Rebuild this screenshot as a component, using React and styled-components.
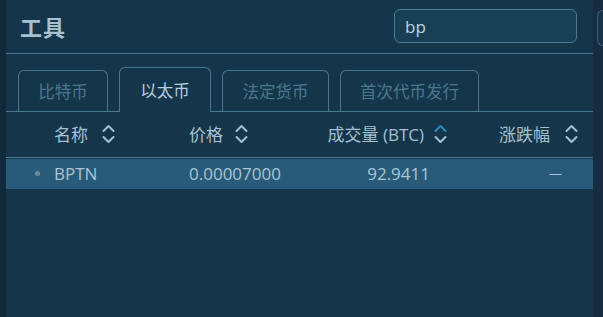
import React from "react";
import styled, { createGlobalStyle } from "styled-components";

const GlobalStyle = createGlobalStyle`
  html, body {
    margin: 0;
    padding: 0;
    background: #11293b;
  }
  body {
    font-family: "Open Sans", "Noto Sans CJK SC", sans-serif;
  }
`;

const Page = styled.div`
  display: flex;
  height: 317px;
  width: 603px;
  overflow: hidden;
`;

const LeftStrip = styled.div`
  width: 6px;
  flex-shrink: 0;
  background: #11293b;
`;

const Panel = styled.div`
  width: 587px;
  flex-shrink: 0;
  background: #15364a;
  display: flex;
  flex-direction: column;
`;

const RightStrip = styled.div`
  flex: 1;
  background: #172c40;
  padding: 10px 0 0 4px;
`;

const GhostBox = styled.div`
  height: 34px;
  border: 1px solid #3c5d74;
  border-right: none;
  border-radius: 7px 0 0 7px;
  background: #183248;
`;

const Header = styled.div`
  height: 54px;
  box-sizing: border-box;
  display: flex;
  align-items: center;
  justify-content: space-between;
  padding: 0 16px 1px 14px;
  border-bottom: 1px solid #4a7690;
`;

const Title = styled.div`
  font-family: "Noto Sans CJK SC", sans-serif;
  font-size: 22px;
  font-weight: 700;
  color: #a8c1d0;
  letter-spacing: 1px;
`;

const Search = styled.input`
  width: 183px;
  height: 34px;
  box-sizing: border-box;
  background: #183f56;
  border: 1px solid #4d7a93;
  border-radius: 6px;
  padding: 0 10px;
  font-family: "Open Sans", sans-serif;
  font-size: 17px;
  color: #bdd3df;
  outline: none;
`;

const Tabs = styled.div`
  display: flex;
  align-items: flex-end;
  gap: 11px;
  padding: 13px 0 0 12px;
  height: 58px;
  box-sizing: border-box;
  border-bottom: 1px solid #4a7690;
`;

const Tab = styled.div`
  width: ${({ $w }) => $w}px;
  height: ${({ $active }) => ($active ? 45 : 41)}px;
  box-sizing: border-box;
  border: 1px solid #4a7690;
  border-bottom: none;
  border-radius: 6px 6px 0 0;
  display: flex;
  align-items: center;
  justify-content: center;
  font-family: "Noto Sans CJK SC", sans-serif;
  font-size: 16.5px;
  color: ${({ $active }) => ($active ? "#b8cfdb" : "#4b7690")};
  background: #15364a;
  margin-bottom: ${({ $active }) => ($active ? "-1px" : "0")};
  padding-bottom: ${({ $active }) => ($active ? "0" : "1px")};
`;

const cols = "48px 135px 111px 155px 1fr";

const HeadRow = styled.div`
  display: grid;
  grid-template-columns: ${cols};
  height: 46px;
  box-sizing: border-box;
  padding-bottom: 2px;
  align-items: center;
  border-bottom: 1px solid #4a7690;
`;

const HeadCell = styled.div`
  grid-column: ${({ $col }) => $col};
  display: flex;
  align-items: center;
  justify-content: ${({ $right }) => ($right ? "flex-end" : "flex-start")};
  gap: ${({ $gap }) => $gap || 12}px;
  padding-right: ${({ $pr }) => $pr || 0}px;
  font-family: "Open Sans", "Noto Sans CJK SC", sans-serif;
  font-size: 17px;
  color: #a6c0cf;
  white-space: nowrap;
`;

const DataRow = styled.div`
  display: grid;
  grid-template-columns: ${cols};
  height: 30px;
  margin-top: 1px;
  padding-bottom: 2px;
  box-sizing: border-box;
  align-items: center;
  background: #285b79;
  font-family: "Open Sans", sans-serif;
  font-size: 17px;
  color: #a9c5d5;
`;

const Cell = styled.div`
  text-align: ${({ $right }) => ($right ? "right" : "left")};
  padding-right: ${({ $pr }) => $pr || 0}px;
  white-space: nowrap;
`;

const Dash = styled(Cell)`
  font-size: 13px;
`;

const Dot = styled.div`
  width: 5px;
  height: 5px;
  border-radius: 50%;
  background: #6b8a9c;
  justify-self: end;
  margin-right: 14px;
`;

const SortIcon = ({ active }) => (
  <svg width="13" height="22" viewBox="0 0 13 22" fill="none">
    <polyline
      points="1.5,8 6.5,3 11.5,8"
      stroke={active ? "#2a8ac2" : "#a6c0cf"}
      strokeWidth="2"
      strokeLinecap="round"
      strokeLinejoin="round"
    />
    <polyline
      points="1.5,14 6.5,19 11.5,14"
      stroke="#a6c0cf"
      strokeWidth="2"
      strokeLinecap="round"
      strokeLinejoin="round"
    />
  </svg>
);

const tabs = [
  { label: "比特币", w: 90 },
  { label: "以太币", w: 92, active: true },
  { label: "法定货币", w: 107 },
  { label: "首次代币发行", w: 139 },
];

export default function App() {
  return (
    <>
      <GlobalStyle />
      <Page>
        <LeftStrip />
        <Panel>
          <Header>
            <Title>工具</Title>
            <Search defaultValue="bp" />
          </Header>
          <Tabs>
            {tabs.map((t) => (
              <Tab key={t.label} $w={t.w} $active={t.active}>
                {t.label}
              </Tab>
            ))}
          </Tabs>
          <HeadRow>
            <HeadCell $col={2} $gap={14}>
              名称 <SortIcon />
            </HeadCell>
            <HeadCell $col={3}>
              价格 <SortIcon />
            </HeadCell>
            <HeadCell $col={4} $right $gap={10} $pr={8}>
              成交量 (BTC) <SortIcon active />
            </HeadCell>
            <HeadCell $col={5} $right $gap={15} $pr={15}>
              涨跌幅 <SortIcon />
            </HeadCell>
          </HeadRow>
          <DataRow>
            <Dot />
            <Cell>BPTN</Cell>
            <Cell>0.00007000</Cell>
            <Cell $right $pr={25}>92.9411</Cell>
            <Dash $right $pr={31}>—</Dash>
          </DataRow>
        </Panel>
        <RightStrip>
          <GhostBox />
        </RightStrip>
      </Page>
    </>
  );
}
